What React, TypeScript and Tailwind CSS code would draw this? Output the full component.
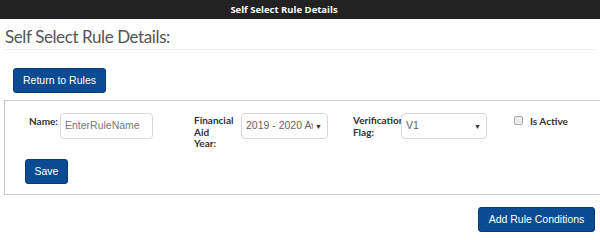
import React from "react";

const lato = { fontFamily: 'Lato, "Open Sans", sans-serif' };
const open = { fontFamily: '"Open Sans", "Noto Sans", sans-serif' };
const arial = { fontFamily: '"Liberation Sans", Arial, sans-serif' };

function Btn({ children, className = "" }: { children: React.ReactNode; className?: string }) {
  return (
    <button
      className={`h-[25px] rounded-[3px] bg-[#0a4b91] border border-[#073d78] text-white text-[10.5px] leading-none flex items-center justify-center ${className}`}
      style={arial}
    >
      {children}
    </button>
  );
}

function Select({ value, className = "" }: { value: string; className?: string }) {
  return (
    <div
      className={`relative h-[26px] rounded-[4px] border border-[#d9d9d9] bg-white flex items-center pl-[4px] pr-[14px] ${className}`}
      style={arial}
    >
      <span className="block w-full text-[10.5px] text-[#666] whitespace-nowrap overflow-hidden">{value}</span>
      <span className="absolute right-[5px] top-[8px] text-[7px] text-[#333]">▼</span>
    </div>
  );
}

export default function App() {
  return (
    <div className="w-[600px] h-[236px] bg-white overflow-hidden flex flex-col">
      <div className="h-[19px] shrink-0 bg-[#222222] flex items-center justify-center pr-[32px]">
        <span className="text-white text-[9.5px] font-bold leading-none" style={open}>
          Self Select Rule Details
        </span>
      </div>
      <div className="mx-[5px] mt-[6px] border-b border-[#ececec]">
        <h1 className="text-[17px] leading-[24px] tracking-[-0.4px] text-[#555555] font-normal" style={lato}>
          Self Select Rule Details:
        </h1>
      </div>
      <div className="pl-[13px] mt-[18px]">
        <Btn className="w-[93px]">Return to Rules</Btn>
      </div>
      <div className="ml-[4px] mt-[7px] h-[95px] shrink-0 border-l border-t border-b border-[#cccccc] pl-[20px] pt-[12px]">
        <div className="flex items-start pl-[4px]">
          <div className="flex items-start w-[165px]">
            <span className="mt-[2px] w-[31px] whitespace-nowrap text-[10px] leading-[12px] font-bold text-[#333]" style={lato}>
              Name:
            </span>
            <div
              className="h-[26px] w-[93px] rounded-[4px] border border-[#d9d9d9] flex items-center pl-[4px] text-[10.5px] text-[#777]"
              style={arial}
            >
              EnterRuleName
            </div>
          </div>
          <div className="flex items-start w-[159px]">
            <span className="mt-[2px] w-[47px] text-[10px] leading-[11.7px] font-bold text-[#333]" style={lato}>
              Financial
              <br />
              Aid
              <br />
              Year:
            </span>
            <Select value="2019 - 2020 Aw" className="w-[87px]" />
          </div>
          <div className="flex items-start w-[161px]">
            <span
              className="mt-[2px] w-[48px] overflow-hidden whitespace-nowrap text-[10px] leading-[11.7px] font-bold text-[#333]"
              style={lato}
            >
              Verification
              <br />
              Flag:
            </span>
            <Select value="V1" className="w-[86px]" />
          </div>
          <div className="flex items-start mt-[3px]">
            <span className="w-[9px] h-[9px] rounded-[2px] border border-[#a9a9a9] bg-[#ececec]" />
            <span className="ml-[7px] -mt-[1px] text-[10px] leading-[12px] font-bold text-[#333]" style={lato}>
              Is Active
            </span>
          </div>
        </div>
        <Btn className="w-[43px] mt-[9px]">Save</Btn>
      </div>
      <div className="flex justify-end pr-[5px] mt-[12px]">
        <Btn className="w-[117px]">Add Rule Conditions</Btn>
      </div>
    </div>
  );
}
